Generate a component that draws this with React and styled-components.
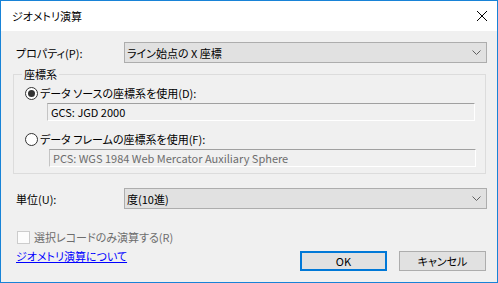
import React from 'react';
import styled, { createGlobalStyle } from 'styled-components';

const GlobalStyle = createGlobalStyle`
  html, body {
    margin: 0;
    padding: 0;
    background: #ffffff;
  }
  body {
    font-family: "Noto Sans CJK JP", "Liberation Sans", sans-serif;
    font-size: 11px;
    font-feature-settings: "palt";
    color: #000;
  }
`;

const Window = styled.div`
  width: 498px;
  height: 283px;
  box-sizing: border-box;
  border: 1px solid #1883d7;
  display: flex;
  flex-direction: column;
  background: #f0f0f0;
`;

const TitleBar = styled.div`
  height: 30px;
  flex: none;
  background: #fff;
  display: flex;
  align-items: center;
  justify-content: space-between;
  padding: 0 10px 0 11px;
`;

const Title = styled.span`
  font-size: 11px;
  line-height: 16px;
`;

const Body = styled.div`
  flex: 1;
  display: flex;
  flex-direction: column;
  padding: 11px 10px 0 15px;
`;

const FieldRow = styled.div`
  display: flex;
  align-items: center;
  margin-top: ${p => p.$top || 0}px;
`;

const FieldLabel = styled.span`
  width: 108px;
  flex: none;
  line-height: 16px;
`;

const Combo = styled.div`
  flex: 1;
  height: 21px;
  box-sizing: border-box;
  border: 1px solid #adadad;
  background: #e1e1e1;
  display: flex;
  align-items: center;
  justify-content: space-between;
  padding: 0 5px 0 2px;
  line-height: 16px;
`;

const GroupBox = styled.div`
  position: relative;
  margin: 11px 1px 0 -3px;
  border: 1px solid #dcdcdc;
  padding: 10px 0 6px 11px;
  display: flex;
  flex-direction: column;
`;

const Legend = styled.span`
  position: absolute;
  top: -9px;
  left: 8px;
  padding: 0 2px;
  background: #f0f0f0;
  line-height: 16px;
`;

const OptionRow = styled.label`
  display: flex;
  align-items: center;
  height: 16px;
  line-height: 16px;
  margin-top: ${p => p.$top || 0}px;
  gap: 2px;
`;

const Radio = styled.span`
  width: 13px;
  height: 13px;
  box-sizing: border-box;
  border-radius: 50%;
  border: 1px solid #333;
  background: #fff;
  display: flex;
  align-items: center;
  justify-content: center;
  flex: none;
  &::after {
    content: '';
    width: 7px;
    height: 7px;
    border-radius: 50%;
    background: ${p => (p.$checked ? '#333' : 'transparent')};
  }
`;

const TextBox = styled.div`
  height: 18px;
  box-sizing: border-box;
  margin: 2px ${p => p.$right}px 0 ${p => p.$left}px;
  border-top: 1px solid #a0a0a0;
  border-left: 1px solid #c4c4c4;
  border-right: 1px solid #fff;
  border-bottom: 1px solid #fff;
  padding-left: 3px;
  line-height: 16px;
  color: ${p => (p.$disabled ? '#6d6d6d' : '#000')};
  white-space: nowrap;
  overflow: hidden;
`;

const CheckRow = styled.label`
  display: flex;
  align-items: center;
  height: 16px;
  line-height: 16px;
  margin: 20px 0 0 1px;
  gap: 4px;
  color: #6d6d6d;
`;

const CheckBox = styled.span`
  width: 13px;
  height: 13px;
  box-sizing: border-box;
  border: 1px solid #cccccc;
  background: #fcfcfc;
  flex: none;
`;

const BottomRow = styled.div`
  display: flex;
  justify-content: space-between;
  align-items: flex-start;
  margin-top: 3px;
`;

const HelpLink = styled.a`
  color: #0000ff;
  text-decoration: underline;
  line-height: 16px;
  cursor: pointer;
`;

const Buttons = styled.div`
  display: flex;
  gap: 12px;
  margin: 3px 1px 0 0;
`;

const Button = styled.button`
  width: 87px;
  height: 20px;
  box-sizing: border-box;
  background: #e1e1e1;
  border: ${p => (p.$primary ? '2px solid #0078d7' : '1px solid #adadad')};
  font-family: inherit;
  font-size: 11px;
  font-feature-settings: "palt";
  line-height: 14px;
  padding: 0;
  color: #000;
`;

const Chevron = () => (
  <svg width="9" height="5" viewBox="0 0 9 5">
    <path d="M0.5 0.5 L4.5 4.5 L8.5 0.5" fill="none" stroke="#606060" strokeWidth="1" />
  </svg>
);

const CloseIcon = () => (
  <svg width="10" height="10" viewBox="0 0 10 10">
    <path d="M0 0 L10 10 M10 0 L0 10" stroke="#000" strokeWidth="1" />
  </svg>
);

export default function App() {
  return (
    <>
      <GlobalStyle />
      <Window>
        <TitleBar>
          <Title>ジオメトリ演算</Title>
          <CloseIcon />
        </TitleBar>
        <Body>
          <FieldRow>
            <FieldLabel>プロパティ(P):</FieldLabel>
            <Combo>
              <span>ライン始点の X 座標</span>
              <Chevron />
            </Combo>
          </FieldRow>

          <GroupBox>
            <Legend>座標系</Legend>
            <OptionRow>
              <Radio $checked />
              <span>データ ソースの座標系を使用(D):</span>
            </OptionRow>
            <TextBox $left={22} $right={10}>GCS: JGD 2000</TextBox>
            <OptionRow $top={10}>
              <Radio />
              <span>データ フレームの座標系を使用(F):</span>
            </OptionRow>
            <TextBox $left={24} $right={9} $disabled>
              PCS: WGS 1984 Web Mercator Auxiliary Sphere
            </TextBox>
          </GroupBox>

          <FieldRow $top={14}>
            <FieldLabel>単位(U):</FieldLabel>
            <Combo>
              <span>度(10進)</span>
              <Chevron />
            </Combo>
          </FieldRow>

          <CheckRow>
            <CheckBox />
            <span>選択レコードのみ演算する(R)</span>
          </CheckRow>

          <BottomRow>
            <HelpLink>ジオメトリ演算について</HelpLink>
            <Buttons>
              <Button $primary>OK</Button>
              <Button>キャンセル</Button>
            </Buttons>
          </BottomRow>
        </Body>
      </Window>
    </>
  );
}
